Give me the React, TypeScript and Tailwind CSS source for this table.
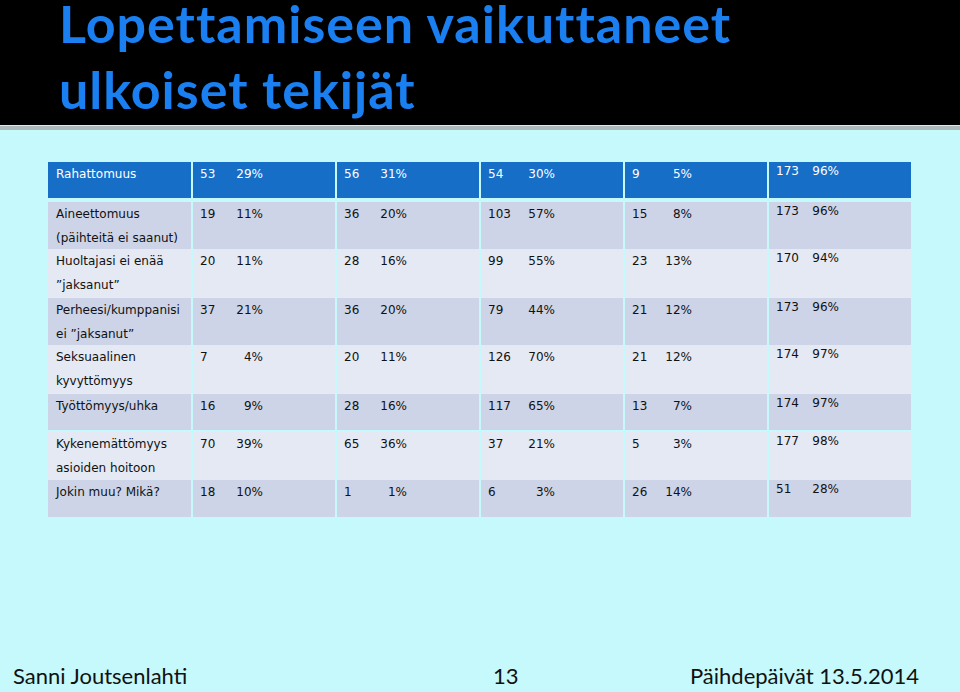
type Row = {
  label: string[];
  cells: [string, string][];
  total: [string, string];
};

const rows: Row[] = [
  {
    label: ["Rahattomuus"],
    cells: [["53", "29%"], ["56", "31%"], ["54", "30%"], ["9", "5%"]],
    total: ["173", "96%"],
  },
  {
    label: ["Aineettomuus", "(päihteitä ei saanut)"],
    cells: [["19", "11%"], ["36", "20%"], ["103", "57%"], ["15", "8%"]],
    total: ["173", "96%"],
  },
  {
    label: ["Huoltajasi ei enää", "”jaksanut”"],
    cells: [["20", "11%"], ["28", "16%"], ["99", "55%"], ["23", "13%"]],
    total: ["170", "94%"],
  },
  {
    label: ["Perheesi/kumppanisi", "ei ”jaksanut”"],
    cells: [["37", "21%"], ["36", "20%"], ["79", "44%"], ["21", "12%"]],
    total: ["173", "96%"],
  },
  {
    label: ["Seksuaalinen", "kyvyttömyys"],
    cells: [["7", "4%"], ["20", "11%"], ["126", "70%"], ["21", "12%"]],
    total: ["174", "97%"],
  },
  {
    label: ["Työttömyys/uhka"],
    cells: [["16", "9%"], ["28", "16%"], ["117", "65%"], ["13", "7%"]],
    total: ["174", "97%"],
  },
  {
    label: ["Kykenemättömyys", "asioiden hoitoon"],
    cells: [["70", "39%"], ["65", "36%"], ["37", "21%"], ["5", "3%"]],
    total: ["177", "98%"],
  },
  {
    label: ["Jokin muu? Mikä?"],
    cells: [["18", "10%"], ["1", "1%"], ["6", "3%"], ["26", "14%"]],
    total: ["51", "28%"],
  },
];

// row heights and fill, header first
const heights = [
  "h-[36px] mb-[2px]",
  "h-[45px]",
  "h-[47px]",
  "h-[45px]",
  "h-[47px]",
  "h-[36px]",
  "h-[46px]",
  "h-[37px]",
];
const fills = [
  "bg-[#166ec7] text-white",
  "bg-[#cdd4e7] text-[#111]",
  "bg-[#e4e9f4] text-[#111]",
  "bg-[#cdd4e7] text-[#111]",
  "bg-[#e4e9f4] text-[#111]",
  "bg-[#cdd4e7] text-[#111]",
  "bg-[#e4e9f4] text-[#111]",
  "bg-[#cdd4e7] text-[#111]",
];
// width from number start to right edge of percentage
const pairW = ["w-[63px]", "w-[63px]", "w-[67px]", "w-[60px]"];

export default function App() {
  return (
    <div className="w-[960px] h-[692px] flex flex-col bg-[#c5f9fb] overflow-hidden">
      {/* title */}
      <div className="h-[125px] bg-black pl-[59px] pt-[1px] font-['Lato',sans-serif] font-bold text-[52px] leading-[44px] tracking-[1px] text-[#1a7ff0]">
        <div>Lopettamiseen vaikuttaneet</div>
        <div className="mt-[22px]">ulkoiset tekijät</div>
      </div>
      <div className="h-[1px] bg-[#e2e6e6]" />
      <div className="h-[4px] bg-[#aebaba]" />

      {/* table */}
      <div className="pl-[48px] pt-[32px] flex flex-col gap-[2px] font-['DejaVu_Sans',sans-serif] text-[12px]">
        {rows.map((r, i) => (
          <div
            key={i}
            className={`grid grid-cols-[143px_142px_142px_142px_142px_142px] gap-x-[2px] ${heights[i]}`}
          >
            <div className={`pl-[8px] leading-[24px] ${fills[i]}`}>
              {r.label.map((l, j) => (
                <div key={j} className="whitespace-nowrap">
                  {l}
                </div>
              ))}
            </div>
            {r.cells.map((c, j) => (
              <div key={j} className={`pl-[7px] leading-[24px] ${fills[i]}`}>
                <div className={`flex justify-between ${pairW[j]}`}>
                  <span>{c[0]}</span>
                  <span>{c[1]}</span>
                </div>
              </div>
            ))}
            <div className={`pl-[7px] pt-[1px] leading-[16px] ${fills[i]}`}>
              <div className="flex justify-between w-[63px]">
                <span>{r.total[0]}</span>
                <span>{r.total[1]}</span>
              </div>
            </div>
          </div>
        ))}
      </div>

      <div className="flex-1" />

      {/* footer */}
      <div className="grid grid-cols-[493px_197px_1fr] pb-[3px] font-['Lato',sans-serif] text-[22px] leading-[26px] text-[#111]">
        <div className="pl-[13px]">Sanni Joutsenlahti</div>
        <div>13</div>
        <div>Päihdepäivät 13.5.2014</div>
      </div>
    </div>
  );
}
